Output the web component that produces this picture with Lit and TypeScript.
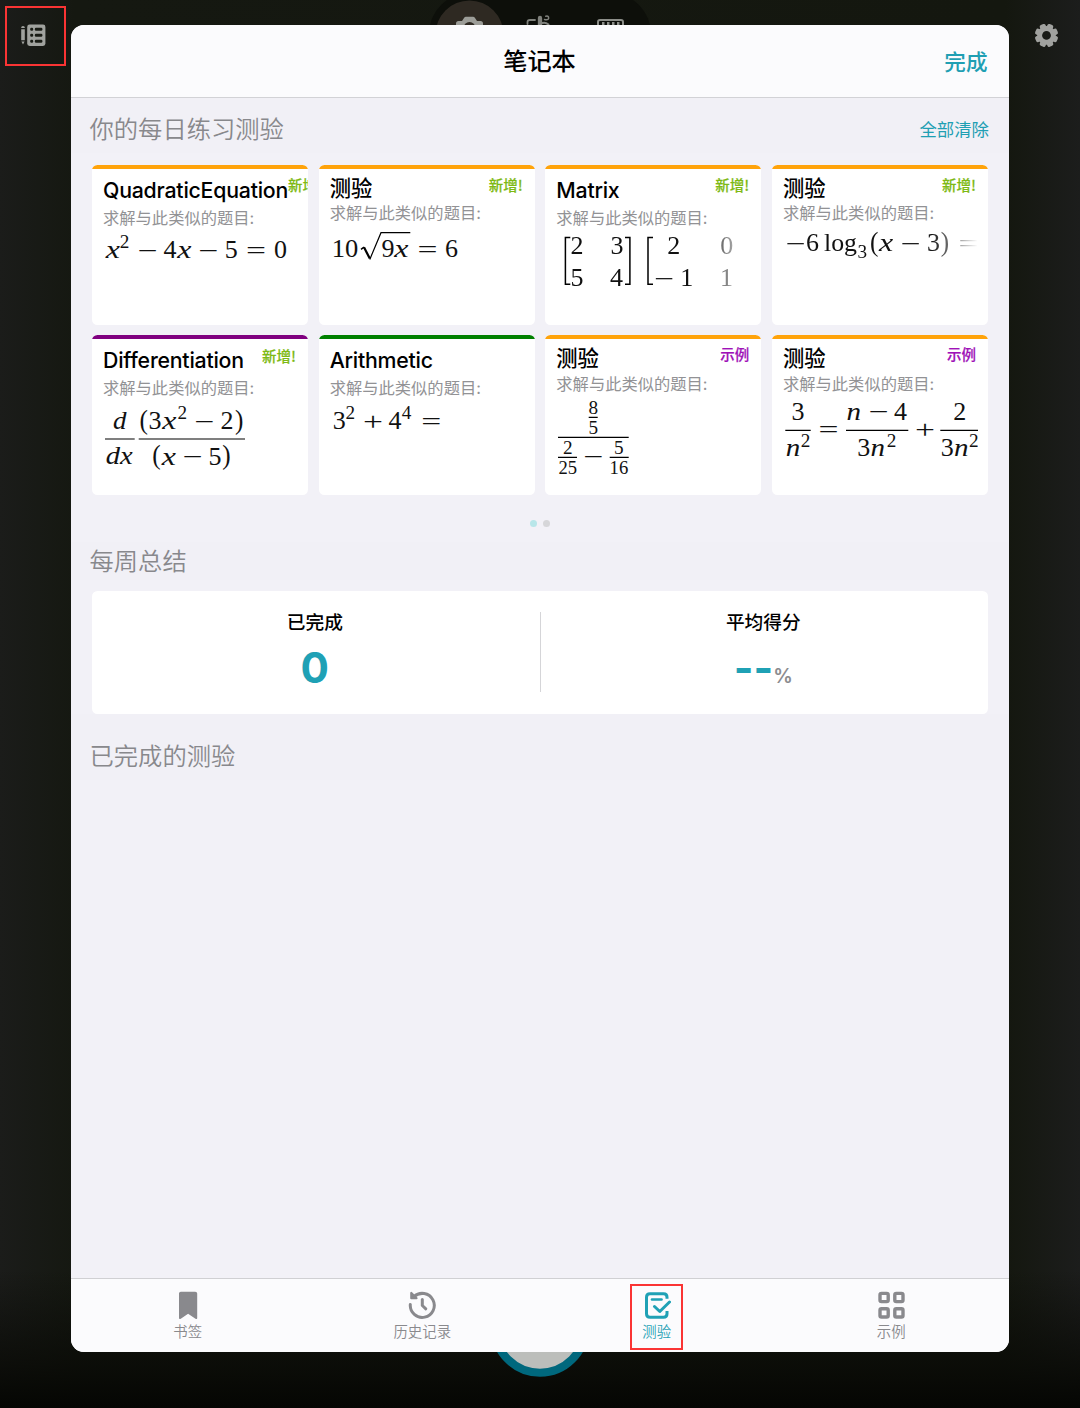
import { LitElement, html, svg, css, SVGTemplateResult, nothing } from "lit";
import { customElement, property } from "lit/decorators.js";

type Part = SVGTemplateResult;

/* One run of a formula: x is where its ink begins, w the width it is set to. */
const num = (s: string, x: number, y: number, w: number, size = 25): Part =>
  svg`<text x=${x} y=${y} font-size=${size} textLength=${w} lengthAdjust="spacingAndGlyphs">${s}</text>`;
const vary = (s: string, x: number, y: number, w: number, size = 25.5): Part =>
  svg`<text x=${x} y=${y} font-size=${size} font-style="italic" textLength=${w} lengthAdjust="spacingAndGlyphs">${s}</text>`;
const op = (s: string, x: number, y: number): Part => num(s, x - 0.8, y + 0.9, 20);
const d = (s: string, x: number, y: number): Part => num(s, x - 0.7, y, 13);
const sup = (s: string, x: number, y: number): Part => num(s, x - 0.5, y, 9.6, 18);
const paren = (s: string, x: number, y: number): Part => num(s, x - 0.8, y - 0.2, 8.4, 28);
const rule = (x1: number, x2: number, y: number): Part =>
  svg`<path d="M${x1} ${y}H${x2}" stroke="#000" stroke-width="1.2" fill="none" />`;
const stroke = (p: string, w = 1.5): Part =>
  svg`<path d=${p} stroke="#000" stroke-width=${w} fill="none" />`;

interface Quiz {
  title: string;
  latin: boolean;
  tone: string;
  badge?: string;
  sample?: boolean;
  fade?: boolean;
  parts: Part[];
}

const quizzes: Quiz[] = [
  {
    title: "QuadraticEquation", latin: true, tone: "orange", badge: "新增!",
    parts: [
      vary("x", 13.7, 92.7, 14.2), sup("2", 28.3, 83), op("−", 46.3, 92.7), d("4", 72.3, 92.7),
      vary("x", 85.3, 92.7, 14.2), op("−", 107, 92.7), d("5", 133.4, 92.7), op("=", 154.7, 92.7), d("0", 182.7, 92.7),
    ],
  },
  {
    title: "测验", latin: false, tone: "orange", badge: "新增!",
    parts: [
      num("10", 12.8, 92, 26.5), stroke("M42 84.3L45 82.2"), stroke("M45 82.2L50.8 93.6", 2.2), stroke("M50.8 94.4L62 67.7H91.3", 1.2),
      d("9", 63.2, 92), vary("x", 75.3, 92, 14.2), op("=", 99.3, 92), d("6", 126.7, 92),
    ],
  },
  {
    title: "Matrix", latin: true, tone: "orange", badge: "新增!", fade: true,
    parts: [
      stroke("M25.3 72.4H20.4V119.3H25.3"), d("2", 26.2, 89), d("3", 66.3, 89), d("5", 26.2, 121), d("4", 65.7, 121),
      stroke("M80 72.4H84.9V119.3H80"), stroke("M108 72.4H103V119.3H108"),
      d("2", 123, 89), op("−", 109.7, 121), d("1", 136, 121), d("0", 176, 89), d("1", 175.6, 121),
    ],
  },
  {
    title: "测验", latin: false, tone: "orange", badge: "新增!", fade: true,
    parts: [
      op("−", 14.3, 86.3), d("6", 34.7, 86.3), num("log", 52, 86.3, 33, 26), sup("3", 86, 92.7), paren("(", 98.7, 86.3),
      vary("x", 107, 86.3, 14.2), op("−", 129.3, 86.3), d("3", 155.7, 86.3), paren(")", 169.5, 86.3), op("=", 187.3, 86.3),
    ],
  },
  {
    title: "Differentiation", latin: true, tone: "purple", badge: "新增!",
    parts: [
      vary("d", 21, 93.7, 13.5), rule(13, 42.7, 104), vary("dx", 13.8, 129.3, 27),
      paren("(", 48.3, 93.7), d("3", 57.3, 93.7), vary("x", 70.3, 93.7, 14.2), sup("2", 86, 83.7), op("−", 103, 93.7),
      d("2", 129.3, 93.7), paren(")", 143.7, 93.7), rule(46.7, 153, 104),
      paren("(", 61, 129.6), vary("x", 69.7, 129.6, 14.2), op("−", 91.3, 129.3), d("5", 117.3, 129.6), paren(")", 131, 129.6),
    ],
  },
  {
    title: "Arithmetic", latin: true, tone: "green",
    parts: [d("3", 14.5, 93.7), sup("2", 27, 83.7), op("+", 44.7, 93.7), d("4", 70.3, 93.7), sup("4", 83.3, 83.7), op("=", 103, 93.7)],
  },
  {
    title: "测验", latin: false, tone: "orange", badge: "示例", sample: true,
    parts: [
      sup("8", 43.9, 79), rule(43.7, 52.7, 82.3), sup("5", 43.9, 99), rule(13, 83.7, 102.3),
      sup("2", 18.4, 118.7), rule(13, 32, 122.3), num("25", 13.4, 138.7, 18.6, 18), op("−", 39, 129.5),
      sup("5", 69.6, 118.7), rule(64.7, 83.7, 122.3), num("16", 64.6, 138.7, 18.6, 18),
    ],
  },
  {
    title: "测验", latin: false, tone: "orange", badge: "示例", sample: true,
    parts: [
      d("3", 20.3, 84.5), rule(13.3, 38.7, 95.3), vary("n", 13.8, 120.7, 14.5), sup("2", 29.2, 112.4), op("=", 47.3, 102),
      vary("n", 74.5, 84.5, 14.5), op("−", 97.3, 84.3), d("4", 122.7, 84.5), rule(74, 136.3, 95.3),
      d("3", 86, 120.7), vary("n", 98.6, 120.7, 14.5), sup("2", 115.2, 112.4), op("+", 143.7, 102.4),
      d("2", 182, 84.5), rule(168.3, 206, 95.3), d("3", 169.5, 120.7), vary("n", 182, 120.7, 14.5), sup("2", 197.4, 112.4),
    ],
  },
];

@customElement("quiz-card")
class QuizCard extends LitElement {
  @property({ attribute: false }) quiz!: Quiz;

  static styles = css`
    :host { display: block; min-width: 0; }
    .card {
      height: 160px; box-sizing: border-box; background: #fff; border-radius: 5.5px; overflow: hidden;
      display: flex; flex-direction: column;
    }
    .bar { height: 4px; flex: none; }
    .orange { background: #ffa30a; }
    .purple { background: #800080; }
    .green { background: #008000; }
    .head { height: 58px; flex: none; padding: 0 12px 0 11px; box-sizing: border-box; }
    .line { display: flex; justify-content: space-between; }
    .title {
      font: 500 21.3px/26px Inter, "Noto Sans CJK SC", sans-serif; white-space: nowrap; color: #000;
      padding-top: 6px; flex: none;
    }
    .latin .title { padding-top: 8px; letter-spacing: -0.22px; }
    .badge {
      font: 500 14.5px/20px "Noto Sans CJK SC", sans-serif; color: #7db913; white-space: nowrap;
      padding-top: 6.5px; flex: none; -webkit-text-stroke: 0.2px currentColor;
    }
    .sample { color: #a012b8; padding-top: 4.8px; }
    .hint {
      font: 400 16.3px/20px Inter, "Noto Sans CJK SC", sans-serif; color: #929295; white-space: nowrap;
      padding-top: 2.4px;
    }
    .latin .hint { padding-top: 5px; }
    .formula { display: block; flex: none; font-family: "Liberation Serif", serif; fill: #111; overflow: hidden; }
    .fade { mask-image: linear-gradient(90deg, #000 158px, transparent 206px); }
  `;

  render() {
    const q = this.quiz;
    return html`<div class="card">
      <div class="bar ${q.tone}"></div>
      <div class="head ${q.latin ? "latin" : ""}">
        <div class="line">
          <div class="title">${q.title}</div>
          ${q.badge ? html`<div class="badge ${q.sample ? "sample" : ""}">${q.badge}</div>` : nothing}
        </div>
        <div class="hint">求解与此类似的题目:</div>
      </div>
      <svg class="formula ${q.fade ? "fade" : ""}" width="206" height="98" viewBox="0 62 206 98">${q.parts}</svg>
    </div>`;
  }
}

const gearTeeth = [0, 45, 90, 135, 180, 225, 270, 315];

@customElement("app-root")
class AppRoot extends LitElement {
  static styles = css`
    :host { display: block; font-family: Inter, "Noto Sans CJK SC", sans-serif; }
    .screen {
      position: relative; width: 1080px; height: 1408px; overflow: hidden;
      background:
        linear-gradient(180deg, rgba(5,6,3,0) 1270px, rgba(9,10,6,.8) 1365px, #050603 1408px),
        linear-gradient(90deg, #1b1c1a 0, #151811 75px, #14170f 1005px, #1c1d1c 1080px);
    }
    .scene { position: absolute; inset: 0; display: block; }
    .callout { position: absolute; border: 2px solid #fa3434; box-sizing: border-box; }
    .callout-note { left: 5px; top: 6px; width: 61px; height: 60px; }
    .callout-tab { left: 630px; top: 1284px; width: 53px; height: 66px; }
    .sheet {
      position: absolute; left: 71px; top: 25px; width: 938px; height: 1327px; border-radius: 13px;
      overflow: hidden; background: #f2f1f7; display: flex; flex-direction: column;
    }
    .top {
      height: 73px; box-sizing: border-box; flex: none; background: #fbfbfd; border-bottom: 1px solid #d2d2d6;
      display: grid; grid-template-columns: 1fr auto 1fr; align-items: center; padding: 0 21.5px;
    }
    .name { grid-column: 2; font-size: 24.2px; font-weight: 500; line-height: 30px; color: #000; padding-top: 1px; margin-left: -1px; }
    .done { justify-self: end; font-size: 21.6px; font-weight: 500; line-height: 30px; color: #1f9fb3; padding-top: 2px; }
    .section { display: flex; justify-content: space-between; align-items: center; padding: 0 20px 0 18.5px; background: #f1f0f6; flex: none; }
    .daily { padding-top: 7px; height: 48px; }
    .section-title { font-size: 24.3px; font-weight: 350; line-height: 32px; color: #88888c; }
    .clear { font-size: 17.4px; line-height: 24px; color: #1f9fb3; padding-top: 1px; }
    .grid { display: grid; grid-template-columns: repeat(4, 216px); gap: 10.67px; padding: 11.67px 21px 0; flex: none; }
    .dots { display: flex; gap: 6px; justify-content: center; padding: 24.5px 0 14.7px; flex: none; }
    .dot { width: 7px; height: 7px; border-radius: 50%; background: #d6d6d9; }
    .dot.on { background: #b8e6e9; }
    .weekly { height: 38px; }
    .stats {
      flex: none; margin: 11.3px 21px 0; height: 123.3px; border-radius: 5.5px; background: #fff;
      display: grid; grid-template-columns: 447.6px 1px 1fr; align-items: center;
    }
    .split { height: 80px; background: #d5d5d8; }
    .stat { text-align: center; height: 100%; }
    .stat-label { font-size: 18.7px; font-weight: 500; line-height: 24px; padding-top: 20.5px; color: #000; margin-left: -2px; }
    .stat-value { font-size: 42.2px; font-weight: 700; line-height: 52px; color: #1fa1b5; padding-top: 7px; margin-left: -2px; }
    .percent { font-size: 19.5px; font-weight: 600; color: #8b8b8f; }
    .finished { height: 48px; padding-top: 18px; }
    .rest { flex: 1; }
    .tabs {
      flex: none; height: 74px; box-sizing: border-box; border-top: 1px solid #d0d0d3; background: #fbfbfd;
      display: grid; grid-template-columns: repeat(4, 1fr); padding-top: 11px;
    }
    .tab { display: flex; flex-direction: column; align-items: center; color: #89898d; font-size: 14.4px; font-weight: 350; line-height: 20px; gap: 2px; margin-left: -1px; }
    .tab.active { color: #1fa1b5; }
    .tab svg { display: block; }
  `;

  private scene() {
    return html`<svg class="scene" width="1080" height="1408" viewBox="0 0 1080 1408">
      <rect x="429" y="-7" width="222" height="82" rx="41" fill="#0d0f0a" />
      <circle cx="469.5" cy="34.5" r="34" fill="#2e2922" />
      <path fill="#9c9d98" d="M456 30V23.500Q456 21 458.500 21H462L464 18Q464.700 16.700 466 16.700H473Q474.300 16.700 475 18L477 21H480.500Q483 21 483 23.500V30Z" />
      <circle cx="469.500" cy="28" r="6" fill="#2e2922" />
      <g fill="none" stroke="#7f817c" stroke-linecap="round">
        <path d="M527.500 24V22Q527.500 20 530 20H535" stroke-width="1.800" />
        <path d="M540 18V30" stroke-width="4.300" />
        <path d="M542.500 23Q545.500 22 548.500 24.500" stroke-width="2" />
        <path d="M544.500 19.500Q549.500 20.500 548.500 17Q548 15.500 545.800 16.200" stroke-width="1.500" />
      </g>
      <rect x="598" y="20" width="25" height="16" rx="2" fill="none" stroke="#8c8e89" stroke-width="2" />
      <path d="M602 23.500H620" stroke="#8c8e89" stroke-width="3" stroke-dasharray="2.500 2.500" />
      <circle cx="540" cy="1327.400" r="45.300" fill="#bcbebb" stroke="#00687d" stroke-width="8" />
      <g fill="#a1a29f" transform="translate(1046.500 35.400)">
        ${gearTeeth.map((a) => svg`<rect x="-3.100" y="-11.700" width="6.200" height="7" rx="1.800" transform="rotate(${a + 22.5})" />`)}
        <path fill-rule="evenodd" d="M0 -9.300A9.300 9.300 0 1 0 0 9.300A9.300 9.300 0 1 0 0 -9.300ZM0 -4.400A4.400 4.400 0 1 1 0 4.400A4.400 4.400 0 1 1 0 -4.400Z" />
      </g>
      <g fill="#a0a29e">
        <path d="M21.200 27.600Q21.200 26 23 26T24.800 27.600V28H21.200ZM21.200 29.200H24.800V40.200H21.200ZM21.400 41.400H24.600L23 44.600Z" />
        <rect x="27.200" y="24.600" width="18.200" height="21.400" rx="2.400" />
      </g>
      <g fill="#181b14">
        ${[29.3, 35.3, 41.3].map((y) => svg`<rect x="30.200" y=${y - 1.5} width="3" height="3" rx="1.200" /><rect x="34.800" y=${y - 1.5} width="7.600" height="3" rx="1.200" />`)}
      </g>
    </svg>`;
  }

  render() {
    return html`<div class="screen">
      ${this.scene()}
      <div class="sheet">
        <div class="top"><div class="name">笔记本</div><div class="done">完成</div></div>
        <div class="section daily"><div class="section-title">你的每日练习测验</div><div class="clear">全部清除</div></div>
        <div class="grid">${quizzes.map((q) => html`<quiz-card .quiz=${q}></quiz-card>`)}</div>
        <div class="dots"><div class="dot on"></div><div class="dot"></div></div>
        <div class="section weekly"><div class="section-title">每周总结</div></div>
        <div class="stats">
          <div class="stat"><div class="stat-label">已完成</div><div class="stat-value">0</div></div>
          <div class="split"></div>
          <div class="stat"><div class="stat-label">平均得分</div><div class="stat-value">--<span class="percent">%</span></div></div>
        </div>
        <div class="section finished"><div class="section-title">已完成的测验</div></div>
        <div class="rest"></div>
        <div class="tabs">
          <div class="tab">
            <svg width="28" height="30" viewBox="0 0 28 30"><path fill="currentColor" d="M5 3.500Q5 1.700 6.800 1.700H21.200Q23.200 1.700 23.200 3.500V28Q23.200 29.700 21.500 28.700L14.100 23.700L6.800 28.700Q5 29.700 5 28Z" /></svg>
            <span>书签</span>
          </div>
          <div class="tab">
            <svg width="28" height="30" viewBox="0 0 28 30" fill="none" stroke="currentColor" stroke-width="3" stroke-linecap="round">
              <path d="M2.300 14.500A12 12 0 1 0 6 6.700" /><path d="M3.300 3V8.200H8.500Z" stroke-width="2.200" fill="currentColor" stroke-linejoin="round" /><path d="M14.300 9.500V15.500L17.800 18.800" stroke-linejoin="round" />
            </svg>
            <span>历史记录</span>
          </div>
          <div class="tab active">
            <svg width="28" height="30" viewBox="0 0 28 30" fill="none" stroke="currentColor" stroke-width="3" stroke-linecap="round" stroke-linejoin="round">
              <path d="M24 8.800V7.300Q24 3.800 20.500 3.800H7Q3.500 3.800 3.500 7.300V23.800Q3.500 27.300 7 27.300H20.500Q24 27.300 24 23.800V21" stroke-linecap="butt" />
              <path d="M9 9.500H18.500" stroke-width="2.600" /><path d="M11.500 16.500L16.800 21.500L26.500 12" />
            </svg>
            <span>测验</span>
          </div>
          <div class="tab">
            <svg width="28" height="30" viewBox="0 0 28 30" fill="none" stroke="currentColor" stroke-width="3.400">
              <rect x="3" y="3.400" width="8.200" height="8.200" rx="1.500" /><rect x="17.800" y="3.400" width="8.200" height="8.200" rx="1.500" />
              <rect x="3" y="18.800" width="8.200" height="8.200" rx="1.500" /><rect x="17.800" y="18.800" width="8.200" height="8.200" rx="1.500" />
            </svg>
            <span>示例</span>
          </div>
        </div>
      </div>
      <div class="callout callout-note"></div>
      <div class="callout callout-tab"></div>
    </div>`;
  }
}
